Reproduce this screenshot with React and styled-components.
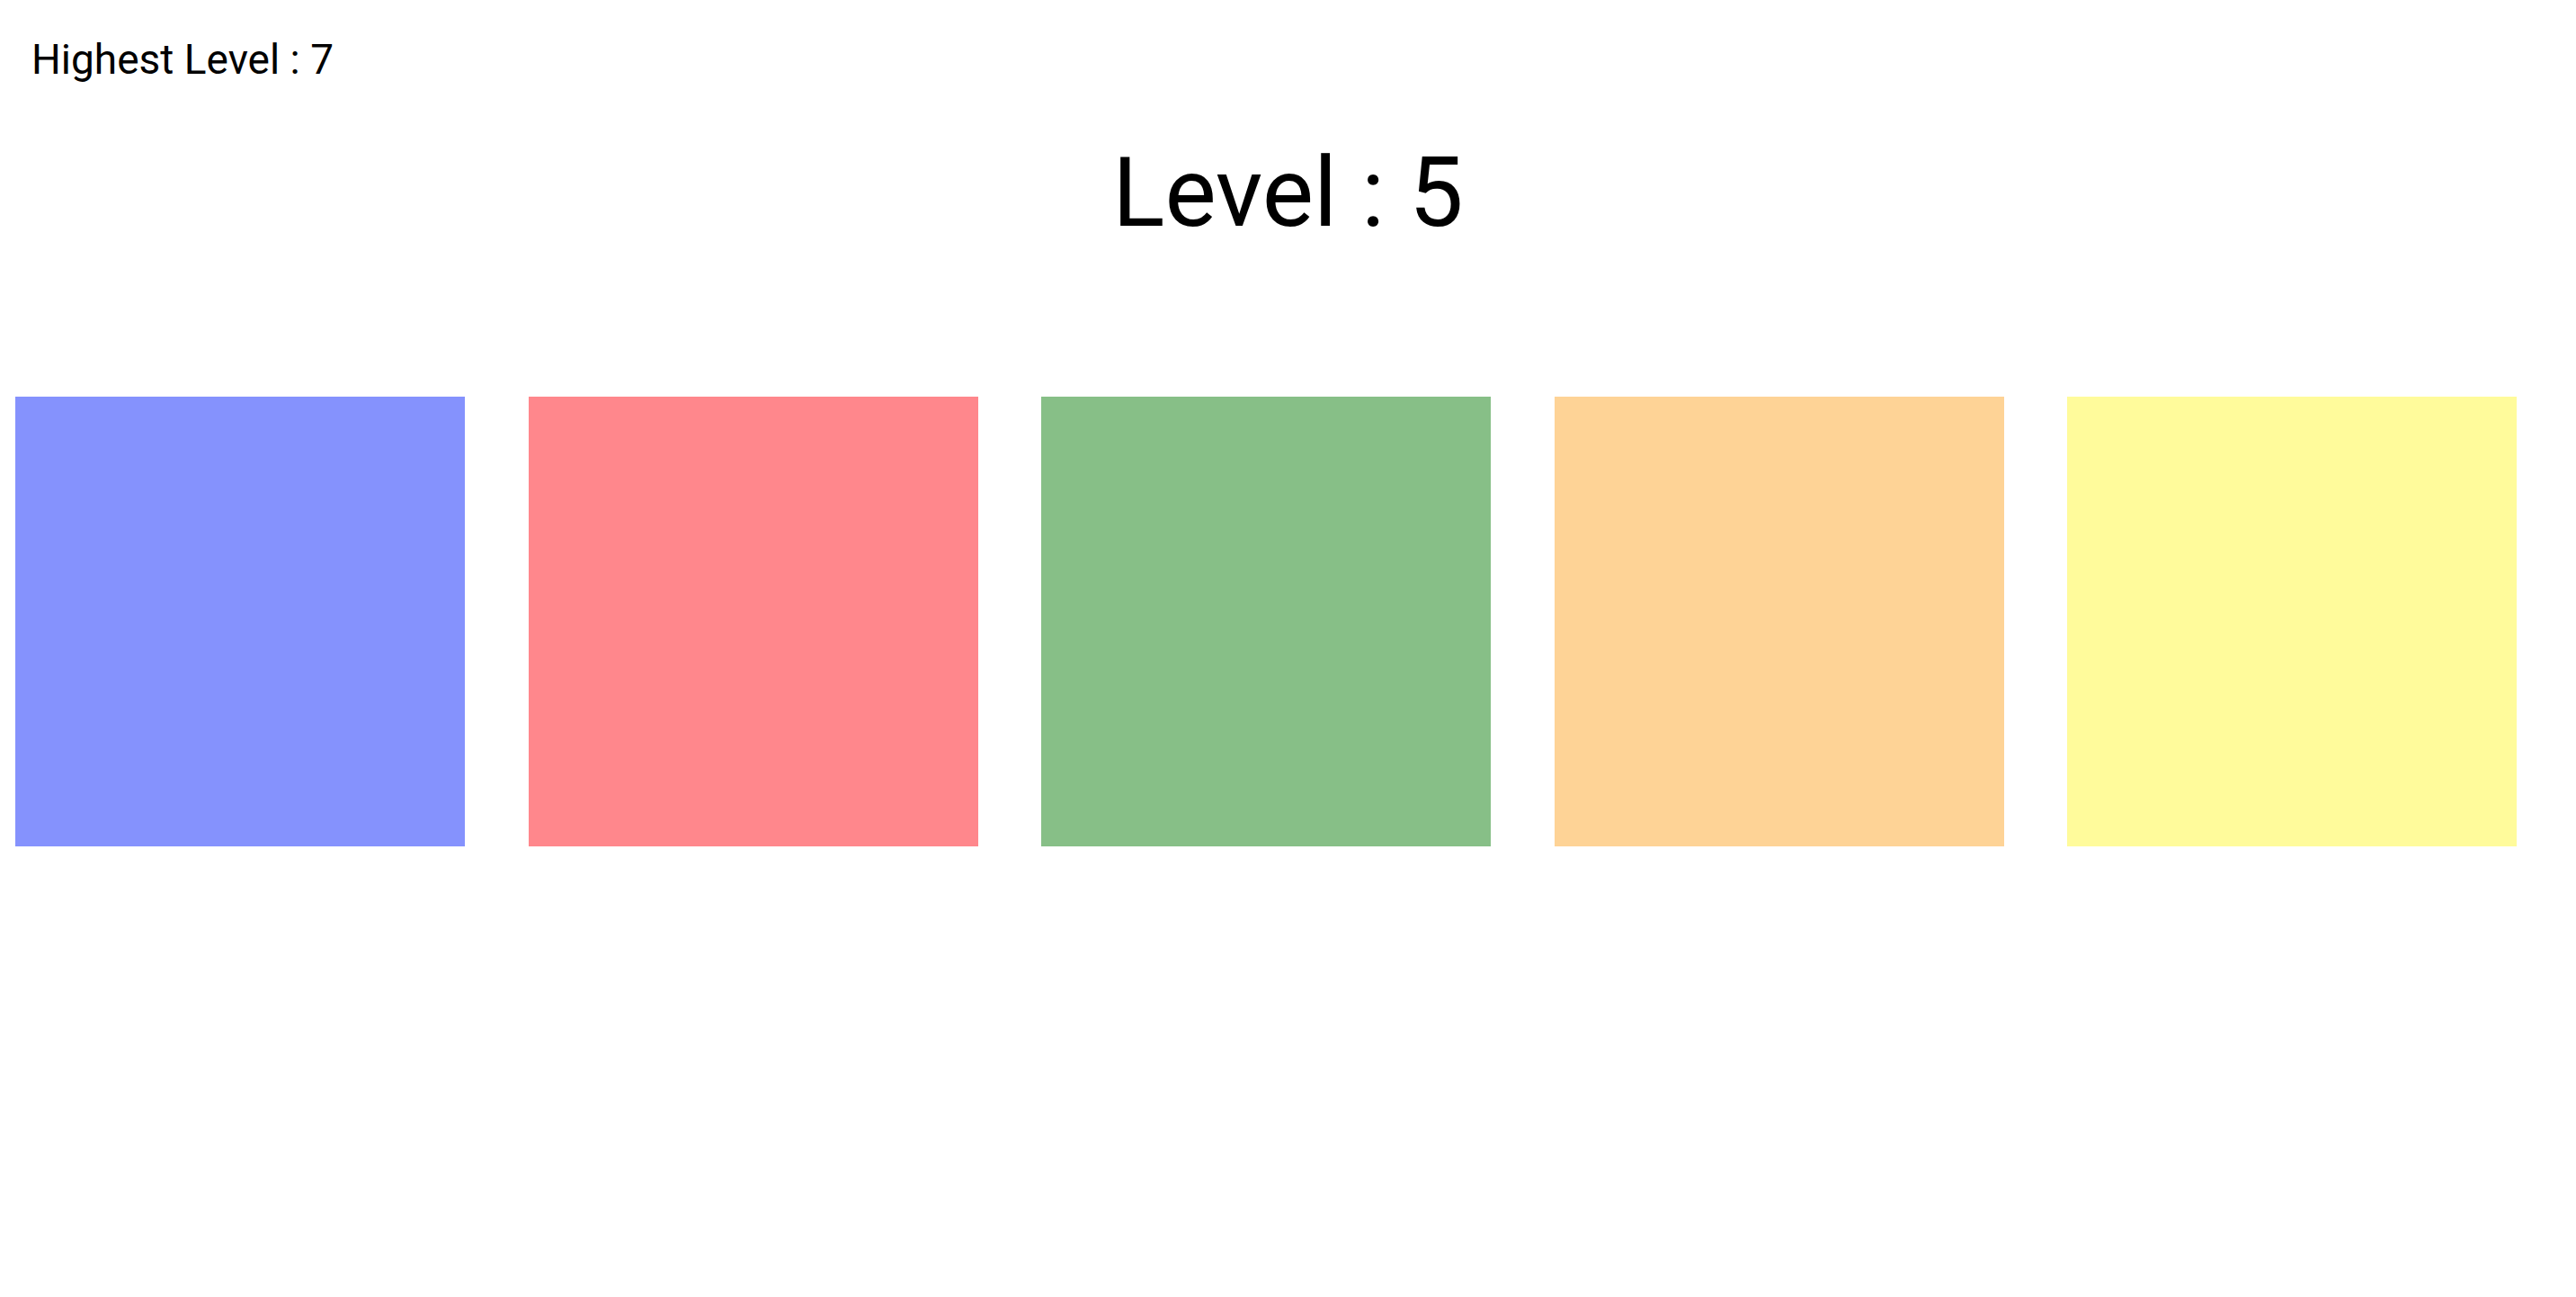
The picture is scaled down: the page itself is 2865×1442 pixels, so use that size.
import React from 'react';
import styled, {createGlobalStyle} from 'styled-components';

const GlobalStyle = createGlobalStyle`
    html, body {
        margin: 0;
        padding: 0;
        background: #ffffff;
    }
    body {
        font-family: Roboto, "Liberation Sans", sans-serif;
        color: #000000;
    }
`;

//Tile colours, in order
const colors = ['#8592fd', '#ff878c', '#87bf87', '#fed396', '#fffb9b'];

const App = () => {
    return (
        <>
            <GlobalStyle />
            <Page>
                <HighScore>Highest Level : 7</HighScore>
                <Title>Level : 5</Title>
                <Board>
                    {colors.map(color => (
                        <Tile key={color} color={color} />
                    ))}
                </Board>
            </Page>
        </>
    );
};

const Page = styled.div`
    min-height: 100vh;
    display: flex;
    flex-direction: column;
`;

const HighScore = styled.div`
    padding: 39px 0 0 35px;
    font-size: 46px;
    line-height: 54px;
    font-weight: 400;
`;

const Title = styled.h1`
    margin: 57px 0 0 0;
    text-align: center;
    font-size: 108px;
    line-height: 129px;
    font-weight: 400;
`;

const Board = styled.div`
    display: flex;
    gap: 70.5px;
    padding-left: 17px;
    margin-top: 162px;
`;

const Tile = styled.div`
    width: 500px;
    height: 500px;
    flex-shrink: 0;
    background: ${props => props.color};
    cursor: pointer;
`;

export default App;
